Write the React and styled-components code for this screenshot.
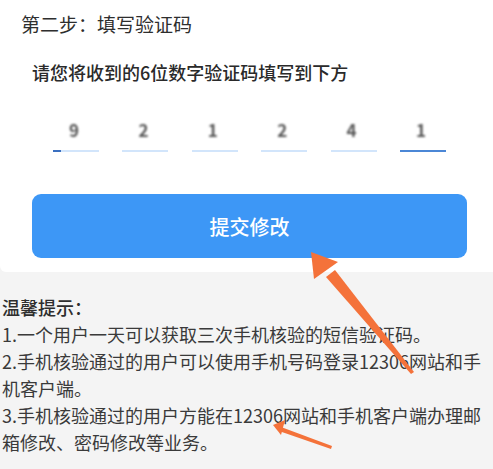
import styled, { createGlobalStyle } from 'styled-components'

const digits = ['9', '2', '1', '2', '4', '1']

const tips = [
  '1.一个用户一天可以获取三次手机核验的短信验证码。',
  '2.手机核验通过的用户可以使用手机号码登录12306网站和手机客户端。',
  '3.手机核验通过的用户方能在12306网站和手机客户端办理邮箱修改、密码修改等业务。',
]

export default function App() {
  return (
    <>
      <GlobalStyle />
      <Page>
        <Card>
          <StepTitle>第二步：填写验证码</StepTitle>
          <Hint>请您将收到的6位数字验证码填写到下方</Hint>
          <CodeRow>
            {digits.map((d, i) => (
              <CodeCell key={i}>
                <Digit>{d}</Digit>
                <Underline $active={i === digits.length - 1} $cursor={i === 0} />
              </CodeCell>
            ))}
          </CodeRow>
          <SubmitButton>提交修改</SubmitButton>
        </Card>
        <Tips>
          <TipsTitle>温馨提示：</TipsTitle>
          {tips.map((t) => (
            <TipLine key={t}>{t}</TipLine>
          ))}
        </Tips>
        <Arrows width="493" height="469" viewBox="0 0 493 469">
          <polygon points="411,374 414,372 335,270 326,277" fill="#f4723a" />
          <polygon points="311,252 338,262 314,279" fill="#f4723a" />
          <polygon points="331,449 332,446 281,427 279,431" fill="#f4723a" />
          <polygon points="273,425 285,420 281,435" fill="#f4723a" />
        </Arrows>
      </Page>
    </>
  )
}

const GlobalStyle = createGlobalStyle`
  body {
    margin: 0;
    background: #f4f4f4;
    font-family: "Noto Sans CJK SC", "Noto Sans", sans-serif;
  }
`
const Page = styled.div`
  position: relative;
  width: 493px;
  height: 469px;
  overflow: hidden;
`
const Card = styled.section`
  background: #ffffff;
  height: 272px;
  box-sizing: border-box;
  padding-top: 10px;
  border-bottom-left-radius: 6px;
`
const StepTitle = styled.h2`
  margin: 0 0 0 21px;
  font-size: 19px;
  line-height: 27px;
  font-weight: 400;
  color: #2e2e2e;
`
const Hint = styled.p`
  margin: 22px 0 0 32px;
  font-size: 18px;
  line-height: 26px;
  font-weight: 500;
  color: #2a2a2a;
`
const CodeRow = styled.div`
  display: grid;
  grid-template-columns: repeat(6, 46px);
  column-gap: 23.4px;
  margin: 34px 0 0 53px;
`
const CodeCell = styled.div`
  display: flex;
  flex-direction: column;
  align-items: center;
`
const Digit = styled.span`
  font-size: 17px;
  line-height: 22px;
  font-weight: 700;
  color: #555555;
  filter: blur(1.1px);
  margin-left: -4px;
`
const Underline = styled.div`
  width: 46px;
  height: 2px;
  margin-top: 9px;
  background: ${(p) =>
    p.$cursor
      ? 'linear-gradient(to right, #3a6fc0 0 8px, #d2e5fb 8px)'
      : p.$active
      ? '#4b87d6'
      : '#d2e5fb'};
  filter: ${(p) => (p.$active ? 'none' : 'blur(0.6px)')};
`
const SubmitButton = styled.button`
  display: block;
  width: 435px;
  height: 64px;
  margin: 42px 0 0 32px;
  border: none;
  border-radius: 9px;
  background: #3d97f6;
  color: #ffffff;
  font-family: inherit;
  font-size: 20px;
  font-weight: 500;
`
const Tips = styled.div`
  margin: 22px 0 0 2px;
  width: 490px;
  color: #3a3a3a;
  font-size: 18px;
  line-height: 27px;
`
const TipsTitle = styled.div`
  font-weight: 500;
  color: #2e2e2e;
`
const TipLine = styled.div``
const Arrows = styled.svg`
  position: absolute;
  left: 0;
  top: 0;
  pointer-events: none;
`
